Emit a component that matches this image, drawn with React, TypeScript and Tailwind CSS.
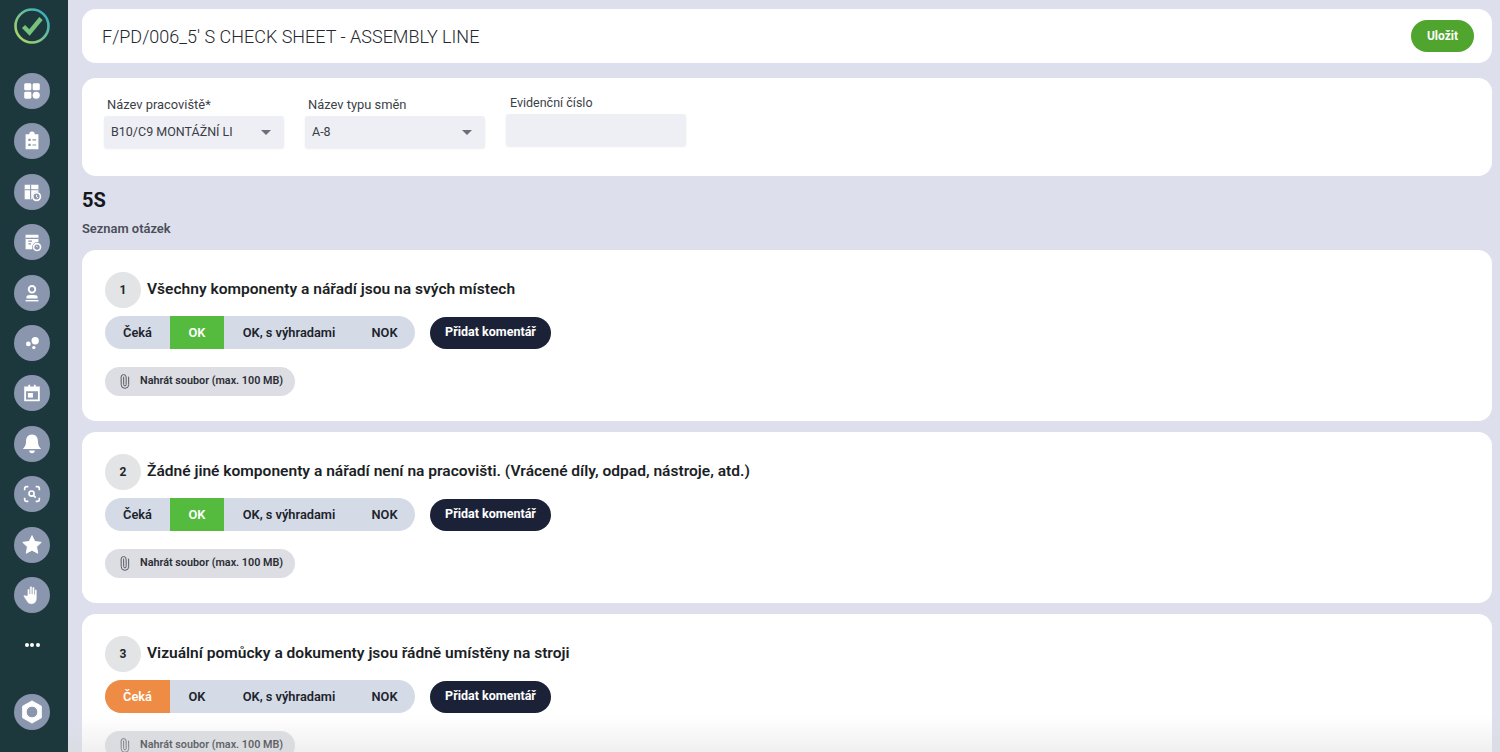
import React from "react";
import { Paperclip } from "lucide-react";

const W = "#fff";
const icons: React.ReactNode[] = [
  <><rect x="3.500" y="3.500" width="7.800" height="7.800" rx="1.600" fill={W} /><rect x="12.700" y="3.500" width="7.800" height="7.800" rx="1.600" fill={W} /><rect x="3.500" y="12.700" width="7.800" height="7.800" rx="1.600" fill={W} /><circle cx="16.600" cy="16.600" r="3.900" fill={W} /></>,
  <><path d="M5 4.500h4a3 3 0 0 1 6 0h4V21H5z" fill={W} /><path d="M8 9.500h2.500V12H8zM8 15h2.500v2.500H8z" fill="#8a96ad" /><path d="M12.500 10.200h4v1.200h-4zM12.500 15.700h4v1.200h-4z" fill="#8a96ad" /></>,
  <><path d="M4 4h15v8a6 6 0 0 0-7 8H4z" fill={W} /><path d="M4 9.500h15M10.500 4v16" stroke="#8a96ad" strokeWidth="1.200" /><circle cx="17" cy="17" r="4.200" fill="none" stroke={W} strokeWidth="1.800" /><path d="M17 15v2.400l1.500 1" stroke={W} strokeWidth="1" fill="none" /></>,
  <><path d="M5 4h14v8a6 6 0 0 0-6.500 8H5z" fill={W} /><path d="M5 8h14M8 11h4M8 14h3" stroke="#8a96ad" strokeWidth="1.200" /><circle cx="17.500" cy="17.500" r="3.800" fill="none" stroke={W} strokeWidth="1.800" /><path d="M16.500 16l1.500 1.800" stroke={W} strokeWidth="1" /></>,
  <><circle cx="12" cy="8" r="3.600" fill="none" stroke={W} strokeWidth="2" /><path d="M6 15.500c1.500-1.600 10.500-1.600 12 0V18H6z" fill={W} /><path d="M5 20.400h14" stroke={W} strokeWidth="1.600" /></>,
  <><circle cx="15.500" cy="9.500" r="4" fill={W} /><circle cx="8" cy="13" r="2.600" fill={W} /><circle cx="14" cy="17" r="1.800" fill={W} /></>,
  <><path d="M4.500 6h15v14h-15z" fill="none" stroke={W} strokeWidth="2" /><path d="M4.500 6h15v4h-15zM8 3h2v3H8zM14 3h2v3h-2z" fill={W} /><rect x="7.500" y="12" width="5.500" height="5" fill={W} /></>,
  <><path d="M12 1.500c4.500 0 6.500 3.500 6.500 7.500 0 4.500 1.500 6 3.500 8.500H2C4 15 5.500 13.500 5.500 9 5.500 5 7.500 1.500 12 1.500z" fill={W} /><path d="M9 19h6a3 3 0 0 1-6 0z" fill={W} /></>,
  <><path d="M4 8V6a2 2 0 0 1 2-2h2M16 4h2a2 2 0 0 1 2 2v2M20 16v2a2 2 0 0 1-2 2h-2M8 20H6a2 2 0 0 1-2-2v-2" stroke={W} strokeWidth="1.800" fill="none" /><circle cx="11.500" cy="11.500" r="2.800" stroke={W} strokeWidth="1.800" fill="none" /><path d="M13.500 13.500l2.500 2.500" stroke={W} strokeWidth="1.800" /></>,
  <path d="M12 1.800l3.100 6.400 7 .9-5.100 4.900 1.300 7-6.300-3.400-6.300 3.400 1.300-7L1.900 9.100l7-.9z" fill={W} stroke={W} strokeLinejoin="round" />,
  <path d="M7 12.500V6.700a1.300 1.300 0 0 1 2.600 0V11V3.800a1.300 1.300 0 0 1 2.600 0V11V4.600a1.300 1.300 0 0 1 2.600 0V11.500V7a1.300 1.300 0 0 1 2.500 0v8c0 4.300-2.500 7-5.800 7-2.700 0-4-1.100-5.200-3.200L3 14c-.8-1.300 1-2.700 2.200-1.400z" fill={W} stroke="#8a96ad" strokeWidth=".5" />,
];

function SideIcon({ children }: { children: React.ReactNode }) {
  return (
    <div className="flex h-[36px] w-[36px] shrink-0 items-center justify-center rounded-full bg-[#8a96ad]">
      <svg viewBox="0 0 24 24" className="h-[22px] w-[22px]">{children}</svg>
    </div>
  );
}

function Sidebar() {
  return (
    <aside className="flex h-[752px] w-[68px] shrink-0 flex-col items-center bg-[#1d383c] pr-[4px]">
      <svg viewBox="0 0 36 36" className="mt-[8px] h-[36px] w-[36px] shrink-0">
        <defs>
          <linearGradient id="ring" x1="0" y1="1" x2="1" y2="0">
            <stop offset="0" stopColor="#b5da5a" />
            <stop offset="1" stopColor="#2aa8c9" />
          </linearGradient>
        </defs>
        <circle cx="18" cy="18" r="16.500" fill="none" stroke="url(#ring)" strokeWidth="2.600" />
        <path d="M9.500 18.500l6 6L27 10.500" fill="none" stroke="#74c27c" strokeWidth="4.400" />
      </svg>
      <div className="mt-[29px] flex flex-col items-center gap-[14.400px]">
        {icons.map((c, i) => <SideIcon key={i}>{c}</SideIcon>)}
      </div>
      <div className="mt-[30px] flex h-[40px] items-start gap-[1.500px]">
        <span className="h-[4px] w-[4px] rounded-full bg-white" />
        <span className="h-[4px] w-[4px] rounded-full bg-white" />
        <span className="h-[4px] w-[4px] rounded-full bg-white" />
      </div>
      <div className="mt-[11px] flex h-[36px] w-[36px] shrink-0 items-center justify-center rounded-full bg-[#8a96ad]">
        <svg viewBox="0 0 24 24" className="h-[28px] w-[28px]">
          <path fillRule="evenodd" d="M12 2.500l8 4.500v10l-8 4.500-8-4.500V7zM12 7a5 5 0 1 0 0 10 5 5 0 0 0 0-10z" fill={W} stroke={W} strokeWidth=".8" strokeLinejoin="round" />
        </svg>
      </div>
    </aside>
  );
}

function Select({ label, value }: { label: string; value: string }) {
  return (
    <div className="w-[180px]">
      <div className="mb-[2px] pl-[3px] text-[12.900px] leading-[18px] text-[#3c3f47]">{label}</div>
      <div className="flex h-[32px] items-center justify-between rounded-[3px] bg-[#eeeff5] pl-[7px] pr-[13px] shadow-[0_1px_2px_rgba(0,0,0,0.08)]">
        <span className="text-[12.500px] text-[#3a3d45]">{value}</span>
        <span className="h-0 w-0 border-x-[5px] border-t-[5px] border-x-transparent border-t-[#6a6f7a]" />
      </div>
    </div>
  );
}

const segs = ["Čeká", "OK", "OK, s výhradami", "NOK"];
const segW = ["w-[65px]", "w-[54px]", "w-[130px]", "w-[61px]"];

function Card({ n, text, active }: { n: number; text: string; active: number }) {
  return (
    <section className="h-[171px] shrink-0 rounded-[14px] bg-white pl-[23px] pt-[22px]">
      <div className="flex h-[36px] items-center gap-[6px]">
        <div className="flex h-[36px] w-[36px] items-center justify-center rounded-full bg-[#e3e4e6] text-[12px] font-bold text-[#22252b]">{n}</div>
        <div className="text-[15.550px] font-semibold text-[#1c1f26]">{text}</div>
      </div>
      <div className="mt-[8px] flex items-center gap-[15px]">
        <div className="flex h-[33px] overflow-hidden rounded-full bg-[#d4dbe7]">
          {segs.map((s, i) => (
            <div
              key={s}
              className={`flex items-center justify-center text-[12.800px] font-semibold ${segW[i]} ${
                i === active ? (active === 0 ? "bg-[#ee8c45] text-white" : "bg-[#55bb3f] text-white") : "text-[#20232b]"
              }`}
            >
              {s}
            </div>
          ))}
        </div>
        <div className="flex h-[32px] w-[121px] items-center justify-center rounded-full bg-[#1b2238] text-[12.500px] font-bold text-white">Přidat komentář</div>
      </div>
      <div className="mt-[18px] flex h-[29px] w-[190px] items-center rounded-full bg-[#dcdee3] pl-[12px]">
        <Paperclip size={15} strokeWidth={1.500} className="-rotate-45 text-[#555a64]" />
        <span className="ml-[8px] whitespace-nowrap text-[10.800px] font-semibold text-[#2a2d35]">Nahrát soubor (max. 100 MB)</span>
      </div>
    </section>
  );
}

export default function App() {
  return (
    <div className="relative flex h-[752px] w-[1500px] overflow-hidden bg-[#dde0ec] font-['Roboto',sans-serif]">
      <Sidebar />
      <main className="flex min-w-0 flex-1 flex-col pl-[14px] pr-[8px] pt-[9px]">
        <header className="flex h-[54px] shrink-0 items-center justify-between rounded-[14px] bg-white pl-[20px] pr-[18px]">
          <h1 className="pt-[1px] text-[18px] font-light text-[#25282e]">F/PD/006_5' S CHECK SHEET - ASSEMBLY LINE</h1>
          <button className="flex h-[32px] w-[63px] items-center justify-center rounded-full bg-[#4fa52d] text-[12px] font-bold text-white">Uložit</button>
        </header>
        <section className="mt-[15px] flex h-[98px] shrink-0 gap-[21px] rounded-[14px] bg-white pl-[22px] pt-[18px]">
          <Select label="Název pracoviště*" value="B10/C9 MONTÁŽNÍ LI" />
          <Select label="Název typu směn" value="A-8" />
          <div className="-mt-[2px] w-[180px]">
            <div className="mb-[2px] pl-[4px] text-[12.500px] leading-[18px] text-[#3c3f47]">Evidenční číslo</div>
            <div className="h-[32px] rounded-[3px] bg-[#eeeff5] shadow-[0_1px_2px_rgba(0,0,0,0.08)]" />
          </div>
        </section>
        <h2 className="mt-[12px] text-[20px] font-bold leading-[24px] text-[#15171c]">5S</h2>
        <div className="mt-[8px] text-[12.900px] font-semibold leading-[18px] text-[#4a4e58]">Seznam otázek</div>
        <div className="mt-[12px] flex flex-col gap-[11px]">
          <Card n={1} active={1} text="Všechny komponenty a nářadí jsou na svých místech" />
          <Card n={2} active={1} text="Žádné jiné komponenty a nářadí není na pracovišti. (Vrácené díly, odpad, nástroje, atd.)" />
          <Card n={3} active={0} text="Vizuální pomůcky a dokumenty jsou řádně umístěny na stroji" />
        </div>
      </main>
      <div className="pointer-events-none absolute bottom-0 left-[68px] right-0 h-[36px] bg-gradient-to-b from-transparent to-[#d8d8d8]/40" />
    </div>
  );
}
